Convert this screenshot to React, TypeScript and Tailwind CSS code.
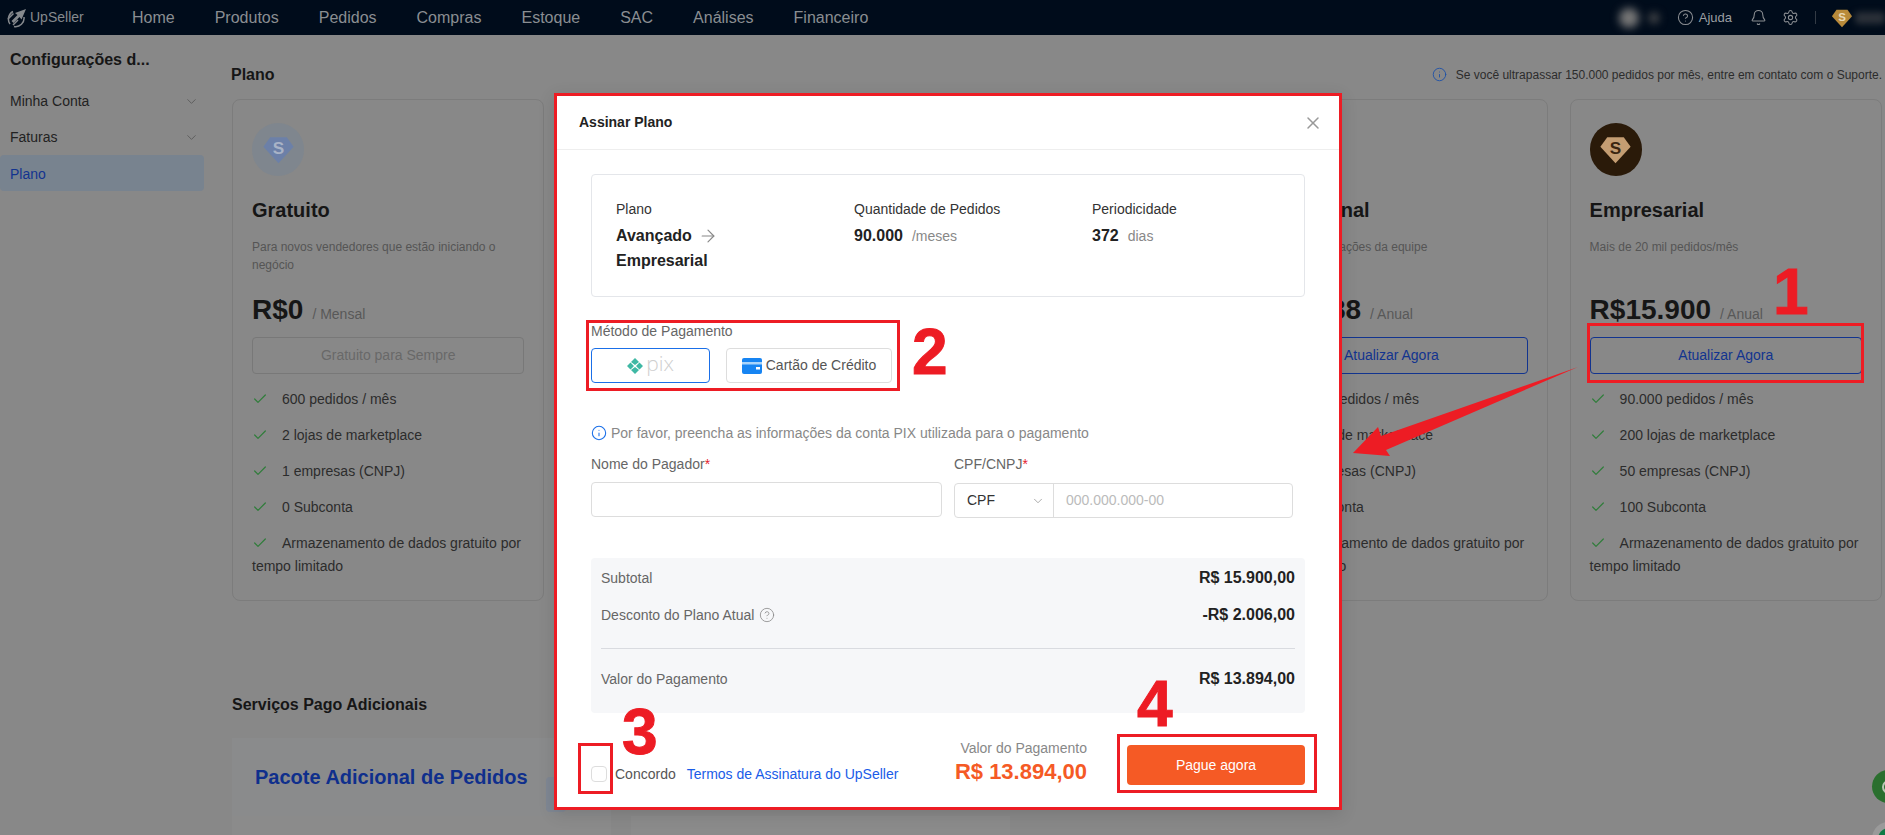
import { ArrowRight, Bell, Check, ChevronDown, CircleHelp, Info, Settings, X } from "lucide-react";

type Plan = {
  readonly id: string;
  readonly name?: string;
  readonly description?: string;
  readonly price?: string;
  readonly period?: string;
  readonly action?: string;
  readonly features: ReadonlyArray<string>;
  readonly icon?: "free" | "gold";
};

const NAV_ITEMS = ["Home", "Produtos", "Pedidos", "Compras", "Estoque", "SAC", "Análises", "Financeiro"] as const;

// the two middle cards sit fully behind the dialog, so they stay empty
const PLANS: ReadonlyArray<Plan> = [
  {
    id: "free",
    name: "Gratuito",
    description: "Para novos vendedores que estão iniciando o negócio",
    price: "R$0",
    period: "/ Mensal",
    action: "Gratuito para Sempre",
    icon: "free",
    features: ["600 pedidos / mês", "2 lojas de marketplace", "1 empresas (CNPJ)", "0 Subconta", "Armazenamento de dados gratuito por tempo limitado"],
  },
  { id: "hidden-1", features: [] },
  { id: "hidden-2", features: [] },
  {
    id: "pro",
    name: "Profissional",
    description: "Para as colaborações da equipe",
    price: "R$5.388",
    period: "/ Anual",
    action: "Atualizar Agora",
    features: ["30.000 pedidos / mês", "50 lojas de marketplace", "10 empresas (CNPJ)", "20 Subconta", "Armazenamento de dados gratuito por tempo limitado"],
  },
  {
    id: "enterprise",
    name: "Empresarial",
    description: "Mais de 20 mil pedidos/mês",
    price: "R$15.900",
    period: "/ Anual",
    action: "Atualizar Agora",
    icon: "gold",
    features: ["90.000 pedidos / mês", "200 lojas de marketplace", "50 empresas (CNPJ)", "100 Subconta", "Armazenamento de dados gratuito por tempo limitado"],
  },
];

function Gem({ fill, ink, size }: { fill: string; ink: string; size: number }) {
  return (
    <svg width={size} height={size} viewBox="0 0 24 24">
      <path d="M6 3h12l5 7-11 12L1 10z" fill={fill} />
      <text x="12" y="15.500" textAnchor="middle" fontSize="12.500" fontWeight="700" fontFamily="Liberation Sans" fill={ink}>
        S
      </text>
    </svg>
  );
}

function Logo() {
  return (
    <svg width="20" height="20" viewBox="0 0 20 20" fill="none" stroke="#85898d" strokeWidth="1.5">
      <path d="M19 1 8 5l2.500 2-6 6 2 2 6-6 2 2.500z" fill="#85898d" stroke="none" />
      <path d="M6 3.500A8.500 8.500 0 0 0 3 16" />
      <path d="M17 9a8.500 8.500 0 0 1-10 9.500" />
      <path d="M1 11 6.500 5.500M6 17l5-5" />
    </svg>
  );
}

function PixMark() {
  return (
    <span className="flex items-center gap-[3px]">
      <svg width="16" height="16" viewBox="0 0 16 16" fill="#3fb8a4">
        <path d="M8 0 12 4 8 7 4 4zM3.500 4.500 7 8 3.500 11.500 0 8zM12.500 4.500 16 8 12.500 11.500 9 8zM8 9l4 3-4 4-4-4z" />
      </svg>
      <span className="-mt-[5px] font-['Open_Sans',sans-serif] text-[21px] leading-none font-light text-[#cfcfcf]">pix</span>
    </span>
  );
}

function PlanCard({ plan }: { plan: Plan }) {
  return (
    <div className="h-[502px] rounded-lg border border-[#7c7c7c] px-[19px] pt-[23px]">
      <div className="flex h-[53px] w-[52px] items-center justify-center rounded-full">
        {plan.icon === "free" && (
          <span className="flex h-[53px] w-[52px] items-center justify-center rounded-full bg-[#7f868e]">
            <Gem fill="#6c80a8" ink="#a9b3c6" size={33} />
          </span>
        )}
        {plan.icon === "gold" && (
          <span className="flex h-[53px] w-[52px] items-center justify-center rounded-full bg-[#2a1a09]">
            <Gem fill="#c49d72" ink="#3a2510" size={33} />
          </span>
        )}
      </div>
      <h3 className="mt-[22px] h-[24px] text-[20px] leading-[24px] font-bold text-[#161616]">{plan.name}</h3>
      <p className="mt-[16px] h-[36px] text-[12px] leading-[18px] text-[#555]">{plan.description}</p>
      <div className="mt-[16px] flex h-[40px] items-baseline gap-[9px]">
        <span className="text-[28px] leading-[40px] font-bold text-[#161616]">{plan.price}</span>
        <span className="text-[14px] text-[#585858]">{plan.period}</span>
      </div>
      {plan.action && (
        <div
          className={`mt-[7px] flex h-[37px] items-center justify-center rounded border text-[14px] ${
            plan.icon === "free" ? "border-[#787878] text-[#696969]" : "border-[#12348f] text-[#12348f]"
          }`}
        >
          {plan.action}
        </div>
      )}
      <ul className="mt-[14px] text-[14px] leading-[23px] text-[#2c2c2c]">
        {plan.features.map((feature) => (
          <li key={feature} className="mb-[13px]">
            <Check size={16} strokeWidth={1.8} className="mr-[14px] inline-block align-[-3px] text-[#2f7d3a]" />
            {feature}
          </li>
        ))}
      </ul>
    </div>
  );
}

function Header() {
  return (
    <header className="flex h-[35px] items-center bg-[#000c1b] text-[#8a8e92]">
      <div className="flex w-[132px] items-center gap-[3px] pl-[7px]">
        <Logo />
        <span className="text-[14px] text-[#85898d]">UpSeller</span>
      </div>
      <nav className="flex gap-[40px] text-[16px]">
        {NAV_ITEMS.map((item) => (
          <span key={item}>{item}</span>
        ))}
      </nav>
      <div className="ml-auto flex items-center">
        <div className="flex w-[50px] items-center gap-[10px] blur-[4px]">
          <span className="h-[20px] w-[20px] rounded-full bg-[#777]" />
          <span className="h-[10px] w-[10px] rounded-full bg-[#555]" />
        </div>
        <CircleHelp size={17} strokeWidth={1.5} className="ml-[8px]" />
        <span className="ml-[5px] text-[13px] text-[#9a9ea2]">Ajuda</span>
        <Bell size={17} strokeWidth={1.5} className="ml-[18px]" />
        <Settings size={17} strokeWidth={1.5} className="ml-[15px]" />
        <span className="ml-[16px] h-[13px] w-px bg-[#333b45]" />
        <span className="ml-[15px]">
          <Gem fill="#b88a3a" ink="#e8d9b8" size={22} />
        </span>
        <span className="ml-[2px] h-[12px] w-[30px] rounded bg-[#2a3038] blur-[3px]" />
      </div>
    </header>
  );
}

function Sidebar() {
  return (
    <aside className="w-[204px] shrink-0 text-[14px] text-[#222]">
      <div className="px-[10px] pt-[15px] text-[16px] leading-[20px] font-bold text-[#161616]">Configurações d...</div>
      <div className="mt-[13px] flex h-[36px] items-center justify-between pr-[5px] pl-[10px]">
        Minha Conta
        <ChevronDown size={15} strokeWidth={1.3} className="text-[#555]" />
      </div>
      <div className="flex h-[36px] items-center justify-between pr-[5px] pl-[10px]">
        Faturas
        <ChevronDown size={15} strokeWidth={1.3} className="text-[#555]" />
      </div>
      <div className="flex h-[36px] items-center rounded bg-[#78838f] pt-[2px] pl-[10px] text-[#12348f]">Plano</div>
    </aside>
  );
}

function PaymentModal() {
  return (
    <div className="absolute top-[93px] left-[554px] flex h-[717px] w-[788px] flex-col border-[3px] border-[#ed1c24] bg-white text-[14px] text-[#555] shadow-[0_4px_16px_rgba(0,0,0,0.12)]">
      <div className="flex h-[54px] shrink-0 items-center justify-between border-b border-[#eee] pr-[16px] pl-[22px]">
        <span className="font-bold text-[#222]">Assinar Plano</span>
        <X size={20} strokeWidth={1.8} className="text-[#999]" />
      </div>
      <div className="flex flex-1 flex-col px-[34px]">
        <div className="mt-[24px] grid h-[123px] grid-cols-[238px_238px_1fr] rounded border border-[#e4e6ea] pt-[24px] pl-[24px] text-[#333]">
          <div>
            <div className="leading-[20px]">Plano</div>
            <div className="mt-[4px] w-[120px] text-[16px] leading-[25px] font-bold text-[#222]">
              Avançado <ArrowRight size={20} strokeWidth={1.4} className="ml-[2px] inline-block align-[-5px] text-[#888]" /> Empresarial
            </div>
          </div>
          <div>
            <div className="leading-[20px]">Quantidade de Pedidos</div>
            <div className="mt-[4px] leading-[25px]">
              <span className="text-[16px] font-bold text-[#222]">90.000</span>
              <span className="ml-[9px] text-[#888]">/meses</span>
            </div>
          </div>
          <div>
            <div className="leading-[20px]">Periodicidade</div>
            <div className="mt-[4px] leading-[25px]">
              <span className="text-[16px] font-bold text-[#222]">372</span>
              <span className="ml-[9px] text-[#888]">dias</span>
            </div>
          </div>
        </div>

        <div className="mt-[24px] leading-[20px] text-[#666]">Método de Pagamento</div>
        <div className="mt-[7px] flex gap-[16px]">
          <div className="flex h-[35px] w-[119px] items-center justify-center rounded border border-[#1a6fe8]">
            <PixMark />
          </div>
          <div className="flex h-[35px] w-[166px] items-center justify-center gap-[4px] rounded border border-[#ddd]">
            <svg width="20" height="16" viewBox="0 0 20 16">
              <rect width="20" height="16" rx="2" fill="#1684f2" />
              <rect y="4" width="20" height="2.500" fill="#a8d4fb" />
              <rect x="14" y="9" width="4" height="2.500" fill="#fff" />
            </svg>
            Cartão de Crédito
          </div>
        </div>

        <div className="mt-[40px] flex items-center gap-[4px] leading-[20px] text-[#888]">
          <Info size={16} strokeWidth={1.6} className="text-[#1a6fe8]" />
          Por favor, preencha as informações da conta PIX utilizada para o pagamento
        </div>
        <div className="mt-[11px] grid grid-cols-[351px_339px] gap-x-[12px]">
          <div>
            <div className="leading-[20px] text-[#666]">
              Nome do Pagador<span className="text-[#e5202e]">*</span>
            </div>
            <div className="mt-[8px] h-[35px] rounded border border-[#ddd]" />
          </div>
          <div>
            <div className="leading-[20px] text-[#666]">
              CPF/CNPJ<span className="text-[#e5202e]">*</span>
            </div>
            <div className="mt-[9px] flex h-[35px] items-center rounded border border-[#ddd]">
              <div className="flex h-full w-[99px] items-center justify-between border-r border-[#ddd] pr-[8px] pl-[12px] text-[#333]">
                CPF
                <ChevronDown size={14} strokeWidth={1.2} className="text-[#888]" />
              </div>
              <span className="pl-[12px] text-[#bbb]">000.000.000-00</span>
            </div>
          </div>
        </div>

        <div className="mt-[40px] h-[155px] rounded bg-[#f6f7f9] px-[10px] pt-[10px] text-[#666]">
          <div className="flex items-center justify-between leading-[20px]">
            Subtotal
            <span className="text-[16px] font-bold text-[#222]">R$ 15.900,00</span>
          </div>
          <div className="mt-[17px] flex items-center justify-between leading-[20px]">
            <span className="flex items-center gap-[5px]">
              Desconto do Plano Atual
              <CircleHelp size={16} strokeWidth={1.2} className="text-[#888]" />
            </span>
            <span className="text-[16px] font-bold text-[#222]">-R$ 2.006,00</span>
          </div>
          <div className="mt-[23px] h-px bg-[#d9dbe0]" />
          <div className="mt-[20px] flex items-center justify-between leading-[20px]">
            Valor do Pagamento
            <span className="text-[16px] font-bold text-[#222]">R$ 13.894,00</span>
          </div>
        </div>

        <div className="mt-[25px] flex items-end justify-between">
          <div className="mb-[3px] flex items-center text-[14px] leading-[16px]">
            <span className="h-[16px] w-[16px] rounded-sm border border-[#ddd]" />
            <span className="ml-[8px]">Concordo</span>
            <span className="ml-[11px] text-[#1a5ce8]">Termos de Assinatura do UpSeller</span>
          </div>
          <div className="flex items-end gap-[40px]">
            <div className="text-right">
              <div className="leading-[20px] text-[#888]">Valor do Pagamento</div>
              <div className="text-[22px] leading-[27px] font-bold text-[#f55a25]">R$ 13.894,00</div>
            </div>
            <div className="flex h-[40px] w-[178px] items-center justify-center rounded bg-[#f55a25] text-white">Pague agora</div>
          </div>
        </div>
      </div>
    </div>
  );
}

function Annotations() {
  const digit = "absolute text-[64px] leading-none font-bold text-[#ed1c24] [-webkit-text-stroke:1px_#ed1c24]";
  return (
    <>
      <div className="absolute top-[323px] left-[1587px] h-[60px] w-[277px] border-[3px] border-[#ed1c24]" />
      <div className="absolute top-[320px] left-[586px] h-[71px] w-[314px] border-[3px] border-[#ed1c24]" />
      <div className="absolute top-[743px] left-[578px] h-[51px] w-[35px] border-[3px] border-[#ed1c24]" />
      <div className="absolute top-[734px] left-[1117px] h-[59px] w-[200px] border-[3px] border-[#ed1c24]" />
      <span className={`${digit} top-[260px] left-[1773px]`}>1</span>
      <span className={`${digit} top-[320px] left-[912px]`}>2</span>
      <span className={`${digit} top-[700px] left-[622px]`}>3</span>
      <span className={`${digit} top-[672px] left-[1137px]`}>4</span>
      <svg className="absolute top-[350px] left-[1340px]" width="250" height="120" viewBox="0 0 250 120">
        <polygon points="13,103 38,77 41,86 238,17 46,100 50,106" fill="#ed1c24" />
      </svg>
    </>
  );
}

export default function App() {
  return (
    <div className="relative h-[835px] w-[1885px] overflow-hidden bg-[#888] font-['Liberation_Sans',Arial,sans-serif]">
      <Header />
      <div className="flex">
        <Sidebar />
        <main className="flex-1 pt-[28px] pr-[3px] pl-[28px]">
          <div className="flex h-[24px] items-center justify-between">
            <h2 className="-ml-px text-[16px] font-bold text-[#161616]">Plano</h2>
            <span className="-mt-px flex items-center gap-[9px] text-[12px] text-[#2c2c2c]">
              <Info size={15} strokeWidth={1.4} className="text-[#1a4fa8]" />
              Se você ultrapassar 150.000 pedidos por mês, entre em contato com o Suporte.
            </span>
          </div>
          <div className="mt-[12px] grid grid-cols-5 gap-[22px]">
            {PLANS.map((plan) => (
              <PlanCard key={plan.id} plan={plan} />
            ))}
          </div>
          <h2 className="mt-[92px] text-[16px] leading-[24px] font-bold text-[#161616]">Serviços Pago Adicionais</h2>
          <div className="mt-[21px] flex h-[78px] w-[379px] items-center bg-[#8a8b8c] pl-[23px]">
            <span className="shrink-0 text-[20px] font-bold text-[#0f2f8c]">Pacote Adicional de Pedidos</span>
            <span className="mt-[34px] ml-[18px] h-[35px] w-[20px] shrink-0 rounded-sm bg-[#7f8793]" />
          </div>
          <div className="grid grid-cols-[379px_379px] gap-[20px]">
            <div className="h-[30px] bg-[#8b8b8b]" />
            <div className="h-[30px] bg-[#8b8b8b]" />
          </div>
        </main>
      </div>
      <PaymentModal />
      <Annotations />
      <div className="absolute top-[770px] left-[1872px] flex h-[33px] w-[33px] items-center justify-center rounded-full bg-[#2a6f2e]">
        <span className="h-[14px] w-[14px] rounded-full border-2 border-[#b9c7b5]" />
      </div>
      <div className="absolute top-[822px] left-[1872px] flex h-[33px] w-[33px] items-center justify-center rounded-full bg-[#9a9a9a]">
        <span className="h-[22px] w-[22px] rounded-full bg-[#0f7a45]" />
      </div>
    </div>
  );
}
